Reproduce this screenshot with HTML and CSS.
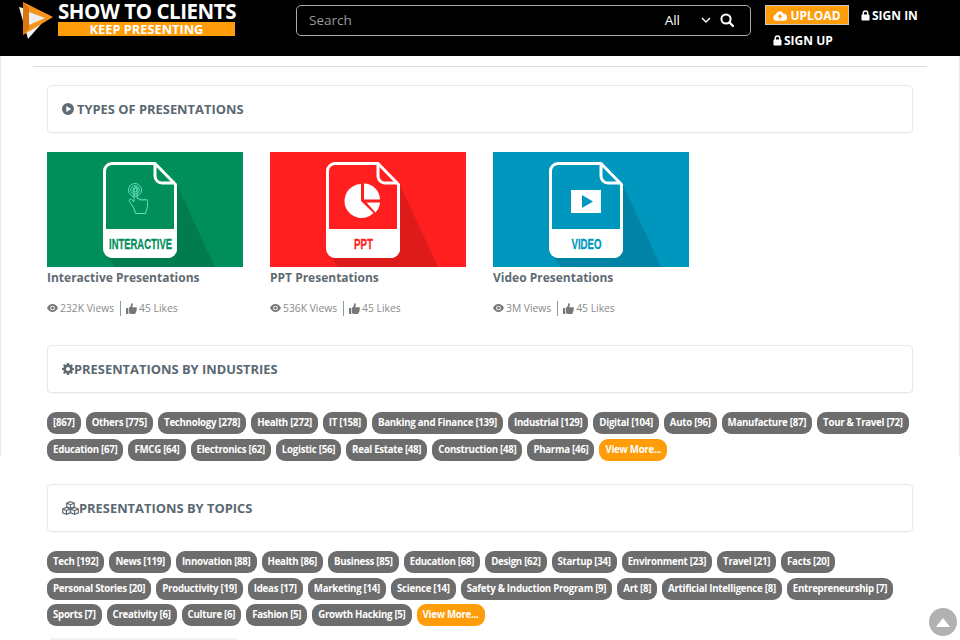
FILE: index.html
```html
<!DOCTYPE html>
<html lang="en">
<head>
<meta charset="utf-8">
<title>Show To Clients</title>
<link rel="stylesheet" href="styles.css">
</head>
<body>
<header class="topbar">
  <a class="logo">
    <svg class="logo-mark" viewBox="0 0 36 38" width="36" height="38">
      <polygon points="0,6 30,14 9,38" fill="#f2f2f2"/>
      <polygon points="4,1 34,16 4,34" fill="#f7941d"/>
      <polygon points="4,1 10,7 10,27 4,34" fill="#d9770f"/>
      <polygon points="10,11 26,17 10,24" fill="#eeeeee"/>
    </svg>
    <span class="logo-text">
      <span class="logo-name">SHOW TO CLIENTS</span>
      <span class="logo-tag">KEEP PRESENTING</span>
    </span>
  </a>
  <form class="search">
    <span class="search-hint">Search</span>
    <span class="search-scope">All</span>
    <svg class="search-chev" viewBox="0 0 10 6" width="10" height="6"><path d="M1 1l4 4 4-4" fill="none" stroke="#fff" stroke-width="1.4"/></svg>
    <svg class="search-glass" viewBox="0 0 14 14" width="14" height="14"><circle cx="6" cy="6" r="4.6" fill="none" stroke="#fff" stroke-width="2"/><path d="M9.4 9.4l3.6 3.6" stroke="#fff" stroke-width="2.2" stroke-linecap="round"/></svg>
  </form>
  <nav class="account">
    <div class="account-row">
      <a class="upload">
        <svg viewBox="0 0 16 12" width="14" height="11"><path d="M4 12a3.6 3.6 0 0 1-.9-7.1A4.6 4.6 0 0 1 11.8 4 4 4 0 0 1 12.500 12z" fill="#fff"/><path d="M8 10V6M6 7.600l2-2.200 2 2.200" fill="none" stroke="#ff9c0a" stroke-width="1.500"/></svg>
        UPLOAD
      </a>
      <a class="account-link">
        <svg viewBox="0 0 10 12" width="9" height="11"><path d="M2.500 5.500V3.500a2.500 2.500 0 0 1 5 0v2" fill="none" stroke="#fff" stroke-width="1.600"/><rect x="0.500" y="5" width="9" height="6.500" rx="1" fill="#fff"/></svg>
        SIGN IN
      </a>
    </div>
    <div class="account-row account-row-second">
      <a class="account-link">
        <svg viewBox="0 0 10 12" width="9" height="11"><path d="M2.500 5.500V3.500a2.500 2.500 0 0 1 5 0v2" fill="none" stroke="#fff" stroke-width="1.600"/><rect x="0.500" y="5" width="9" height="6.500" rx="1" fill="#fff"/></svg>
        SIGN UP
      </a>
    </div>
  </nav>
</header>

<main class="page">
  <hr class="rule">

  <section class="block">
    <h2 class="panel panel-first">
      <svg class="panel-icon" viewBox="0 0 12 12" width="12" height="12"><path fill-rule="evenodd" d="M6 0a6 6 0 1 1 0 12A6 6 0 0 1 6 0zM4.300 3v6L9.300 6z" fill="#5f6b73"/></svg>
      <span>TYPES OF PRESENTATIONS</span>
    </h2>
    <div class="cards">
      <article class="card">
        <svg class="thumb thumb-green" viewBox="0 0 196 115" width="196" height="115">
          <polygon class="doc-shadow" points="130,33 168,115 68,115 56,100"/>
          <path class="doc-body" d="M65 11.500h43l20.500 21V97a7.500 7.500 0 0 1-7.500 7.500H65a7.500 7.500 0 0 1-7.500-7.500V19a7.500 7.500 0 0 1 7.500-7.500z"/>
          <path class="doc-foot" d="M57 77h73v20a9 9 0 0 1-9 9H66a9 9 0 0 1-9-9z"/>
          <path class="doc-fold" d="M108 12v12a7 7 0 0 0 7 7h13"/>
          <text class="doc-label label-green" x="93.500" y="96.500" text-anchor="middle" textLength="63" lengthAdjust="spacingAndGlyphs">INTERACTIVE</text>
          <g class="hand">
            <circle cx="88" cy="38" r="2"/><circle cx="88" cy="38" r="4.200"/><circle cx="88" cy="38" r="6.500"/>
            <path d="M87 36v14l-2.500-2.500c-1.500-1-3 .5-2 2l4.500 7 1.500 5h10l2-7v-6c0-1.500-2-1.500-2.200 0 0-1.500-2.300-1.500-2.500 0 0-1.500-2.300-1.500-2.500 0l-.2-1.500-3-.5V36c0-1.500-2.600-1.500-2.600 0z"/>
          </g>
        </svg>
        <h3 class="card-title">Interactive Presentations</h3>
        <p class="stats">
          <svg viewBox="0 0 14 10" width="11" height="8"><path fill-rule="evenodd" d="M7 0c3 0 5.500 2 7 5-1.500 3-4 5-7 5S1.500 8 0 5c1.500-3 4-5 7-5zm0 2a3 3 0 1 0 0 6 3 3 0 0 0 0-6z" fill="#777"/><circle cx="7" cy="5" r="1.800" fill="#777"/></svg>
          <span>232K Views</span><span class="sep"></span>
          <svg viewBox="0 0 12 12" width="11" height="11"><path d="M0 5.500h2.500V12H0zM3.300 5.500 5.500 2.800V.8C5.500 0 7.300 0 7.500 1.500c.1 1-.4 2-.8 3h4c1.300 0 1.500 1.300.8 2 .6.700.4 1.600-.3 2 .3.800 0 1.500-.7 1.800.1 1-.5 1.700-1.500 1.700H6c-1 0-1.800-.6-2.700-.8z" fill="#777"/></svg>
          <span>45 Likes</span>
        </p>
      </article>
      <article class="card">
        <svg class="thumb thumb-red" viewBox="0 0 196 115" width="196" height="115">
          <polygon class="doc-shadow" points="130,33 168,115 68,115 56,100"/>
          <path class="doc-body" d="M65 11.500h43l20.500 21V97a7.500 7.500 0 0 1-7.500 7.500H65a7.500 7.500 0 0 1-7.500-7.500V19a7.500 7.500 0 0 1 7.500-7.500z"/>
          <path class="doc-foot" d="M57 77h73v20a9 9 0 0 1-9 9H66a9 9 0 0 1-9-9z"/>
          <path class="doc-fold" d="M108 12v12a7 7 0 0 0 7 7h13"/>
          <text class="doc-label label-red" x="93.500" y="96.500" text-anchor="middle" textLength="19" lengthAdjust="spacingAndGlyphs">PPT</text>
          <path class="pie" d="M91 32A17 17 0 1 0 103.500 61L91 49z"/>
          <path class="pie" d="M94 31.500A16.500 16.500 0 0 1 110 47.500H94z"/>
          <path class="pie" d="M96.500 50.500H110A17 17 0 0 1 105.500 60.500z"/>
        </svg>
        <h3 class="card-title">PPT Presentations</h3>
        <p class="stats">
          <svg viewBox="0 0 14 10" width="11" height="8"><path fill-rule="evenodd" d="M7 0c3 0 5.500 2 7 5-1.500 3-4 5-7 5S1.500 8 0 5c1.500-3 4-5 7-5zm0 2a3 3 0 1 0 0 6 3 3 0 0 0 0-6z" fill="#777"/><circle cx="7" cy="5" r="1.800" fill="#777"/></svg>
          <span>536K Views</span><span class="sep"></span>
          <svg viewBox="0 0 12 12" width="11" height="11"><path d="M0 5.500h2.500V12H0zM3.300 5.500 5.500 2.800V.8C5.500 0 7.300 0 7.500 1.500c.1 1-.4 2-.8 3h4c1.300 0 1.500 1.300.8 2 .6.700.4 1.600-.3 2 .3.800 0 1.500-.7 1.800.1 1-.5 1.700-1.500 1.700H6c-1 0-1.800-.6-2.700-.8z" fill="#777"/></svg>
          <span>45 Likes</span>
        </p>
      </article>
      <article class="card">
        <svg class="thumb thumb-blue" viewBox="0 0 196 115" width="196" height="115">
          <polygon class="doc-shadow" points="130,33 168,115 68,115 56,100"/>
          <path class="doc-body" d="M65 11.500h43l20.500 21V97a7.500 7.500 0 0 1-7.500 7.500H65a7.500 7.500 0 0 1-7.500-7.500V19a7.500 7.500 0 0 1 7.500-7.500z"/>
          <path class="doc-foot" d="M57 77h73v20a9 9 0 0 1-9 9H66a9 9 0 0 1-9-9z"/>
          <path class="doc-fold" d="M108 12v12a7 7 0 0 0 7 7h13"/>
          <text class="doc-label label-blue" x="93.500" y="96.500" text-anchor="middle" textLength="30" lengthAdjust="spacingAndGlyphs">VIDEO</text>
          <rect class="pie" x="78" y="38" width="30" height="23"/>
          <polygon class="play" points="89,43 100,49.500 89,56"/>
        </svg>
        <h3 class="card-title">Video Presentations</h3>
        <p class="stats">
          <svg viewBox="0 0 14 10" width="11" height="8"><path fill-rule="evenodd" d="M7 0c3 0 5.500 2 7 5-1.500 3-4 5-7 5S1.500 8 0 5c1.500-3 4-5 7-5zm0 2a3 3 0 1 0 0 6 3 3 0 0 0 0-6z" fill="#777"/><circle cx="7" cy="5" r="1.800" fill="#777"/></svg>
          <span>3M Views</span><span class="sep"></span>
          <svg viewBox="0 0 12 12" width="11" height="11"><path d="M0 5.500h2.500V12H0zM3.300 5.500 5.500 2.800V.8C5.500 0 7.300 0 7.500 1.500c.1 1-.4 2-.8 3h4c1.300 0 1.500 1.300.8 2 .6.700.4 1.600-.3 2 .3.800 0 1.500-.7 1.800.1 1-.5 1.700-1.500 1.700H6c-1 0-1.800-.6-2.700-.8z" fill="#777"/></svg>
          <span>45 Likes</span>
        </p>
      </article>
    </div>
  </section>

  <section class="block">
    <h2 class="panel">
      <svg class="panel-icon" viewBox="0 0 12 12" width="12" height="12"><path fill-rule="evenodd" d="M5 0h2l.3 1.600 1.100.5L9.800 1.200l1.100 1.100-.9 1.400.5 1.100L12 5v2l-1.500.3-.5 1.100.9 1.400-1.100 1.100-1.400-.9-1.100.5L7 12H5l-.3-1.500-1.100-.5-1.400.9-1.100-1.100.9-1.400-.5-1.100L0 7V5l1.500-.3.5-1.100-.9-1.400 1.100-1.100 1.400.9 1.100-.5zM6 4a2 2 0 1 0 0 4 2 2 0 0 0 0-4z" fill="#5f6b73"/></svg>
      <span>PRESENTATIONS BY INDUSTRIES</span>
    </h2>
    <div class="tags">
      <a class="tag">[867]</a>
      <a class="tag">Others [775]</a>
      <a class="tag">Technology [278]</a>
      <a class="tag">Health [272]</a>
      <a class="tag">IT [158]</a>
      <a class="tag">Banking and Finance [139]</a>
      <a class="tag">Industrial [129]</a>
      <a class="tag">Digital [104]</a>
      <a class="tag">Auto [96]</a>
      <a class="tag">Manufacture [87]</a>
      <a class="tag">Tour &amp; Travel [72]</a>
      <a class="tag">Education [67]</a>
      <a class="tag">FMCG [64]</a>
      <a class="tag">Electronics [62]</a>
      <a class="tag">Logistic [56]</a>
      <a class="tag">Real Estate [48]</a>
      <a class="tag">Construction [48]</a>
      <a class="tag">Pharma [46]</a>
      <a class="tag tag-more">View More...</a>
    </div>
  </section>

  <section class="block">
    <h2 class="panel">
      <svg class="panel-icon" viewBox="0 0 17 14" width="17" height="14"><g class="cubes"><path d="M8.500 .7l3.800 1.500v3.600L8.500 7.300 4.700 5.800V2.200zM4.700 2.200l3.800 1.500 3.800-1.500M8.500 3.700v3.600"/><path d="M4.500 6.500l3.800 1.500v3.800l-3.800 1.500-3.800-1.500V8zM.7 8l3.800 1.500L8.300 8M4.500 9.500v3.800"/><path d="M12.500 6.500l3.800 1.500v3.800l-3.800 1.500-3.800-1.500V8zM8.700 8l3.800 1.500L16.300 8M12.500 9.500v3.800"/></g></svg>
      <span>PRESENTATIONS BY TOPICS</span>
    </h2>
    <div class="tags tags-last">
      <a class="tag">Tech [192]</a>
      <a class="tag">News [119]</a>
      <a class="tag">Innovation [88]</a>
      <a class="tag">Health [86]</a>
      <a class="tag">Business [85]</a>
      <a class="tag">Education [68]</a>
      <a class="tag">Design [62]</a>
      <a class="tag">Startup [34]</a>
      <a class="tag">Environment [23]</a>
      <a class="tag">Travel [21]</a>
      <a class="tag">Facts [20]</a>
      <a class="tag">Personal Stories [20]</a>
      <a class="tag">Productivity [19]</a>
      <a class="tag">Ideas [17]</a>
      <a class="tag">Marketing [14]</a>
      <a class="tag">Science [14]</a>
      <a class="tag">Safety &amp; Induction Program [9]</a>
      <a class="tag">Art [8]</a>
      <a class="tag">Artificial Intelligence [8]</a>
      <a class="tag">Entrepreneurship [7]</a>
      <a class="tag">Sports [7]</a>
      <a class="tag">Creativity [6]</a>
      <a class="tag">Culture [6]</a>
      <a class="tag">Fashion [5]</a>
      <a class="tag">Growth Hacking [5]</a>
      <a class="tag tag-more">View More...</a>
    </div>
    <div class="peek"></div>
  </section>
</main>

<a class="to-top"><svg viewBox="0 0 14 9" width="14" height="9"><polygon points="7,0 14,9 0,9" fill="#fff"/></svg></a>
</body>
</html>
```
FILE: styles.css
```css
* { box-sizing: border-box; }
html, body { height: 640px; overflow: hidden; }
body { margin: 0; background: #fff; font-family: "Open Sans", "Liberation Sans", sans-serif; color: #5f6b73; }
body::before { content: ""; position: fixed; top: 56px; left: 0; right: 0; height: 400px; border-left: 1px solid #e8e8e8; border-right: 1px solid #e8e8e8; pointer-events: none; }
a { color: inherit; text-decoration: none; }

.topbar { height: 56px; background: #000; display: flex; align-items: flex-start; padding-left: 19px; }
.logo { width: 277px; display: flex; align-items: flex-start; height: 40px; }
.logo-mark { flex: none; margin-top: 1px; margin-right: 3px; }
.logo-text { width: 178px; display: flex; flex-direction: column; }
.logo-name { color: #fff; font-size: 20.5px; font-weight: 700; line-height: 22px; white-space: nowrap; letter-spacing: -.44px; }
.logo-tag { width: 177px; background: #ff9c0a; color: #fff; font-size: 12.8px; font-weight: 700; line-height: 14px; height: 14px; text-align: center; }

.search { width: 455px; height: 31px; margin-top: 5px; border: 1px solid #aaa; border-radius: 5px; display: flex; align-items: center; padding: 0 0 2px 12px; color: #fff; font-size: 13.5px; }
.search-hint { color: #9a9a9a; flex: 1; }
.search-scope { margin-right: 21px; font-size: 13.5px; }
.search-chev { margin-right: 9px; }
.search-glass { margin-right: 16px; }

.account { margin-left: 14px; color: #fff; font-size: 12px; font-weight: 700; }
.account-row { display: flex; align-items: center; margin-top: 5px; }
.account-row-second { margin-top: 7px; padding-left: 8px; }
.upload { width: 84px; height: 20px; background: #ff9c0a; border: 1px solid #c9c9c9; display: flex; align-items: center; justify-content: center; gap: 3px; margin-right: 12px; }
.account-link { display: flex; align-items: center; gap: 2px; }

.page { padding: 10px 33px 0; }
.rule { margin: 0 0 18px; border: 0; border-top: 1px solid #ddd; height: 1px; }
.block { padding: 0 14px; }
.panel { margin: 0; height: 48px; border: 1px solid #e8e8e8; border-radius: 4px; display: flex; align-items: center; padding-left: 14px; gap: 0; font-size: 12.9px; font-weight: 700; color: #5a6872; box-shadow: 0 1px 1px rgba(0,0,0,.03); }
.panel-first { gap: 3px; }
.panel-icon { flex: none; }
.cubes { fill: #fff; stroke: #5f6b73; stroke-width: 1.2; }

.cards { display: flex; gap: 27px; margin-top: 19px; margin-bottom: 29px; }
.card { width: 196px; }
.thumb { display: block; }
.thumb-green { background: #008f5a; }
.thumb-red { background: #ff1f1f; }
.thumb-blue { background: #0097be; }
.doc-shadow { fill: rgba(0,0,0,.13); }
.doc-body { stroke: #fff; stroke-width: 3; }
.thumb-green .doc-body { fill: #008f5a; }
.thumb-red .doc-body { fill: #ff1f1f; }
.thumb-blue .doc-body { fill: #0097be; }
.doc-foot { fill: #fff; }
.doc-fold { fill: none; stroke: #fff; stroke-width: 3; }
.doc-label { font-family: "Liberation Sans", sans-serif; font-size: 15px; font-weight: 700; stroke-width: .3; }
.label-green { fill: #008f5a; stroke: #008f5a; }
.label-red { fill: #ff1f1f; stroke: #ff1f1f; }
.label-blue { fill: #0097be; stroke: #0097be; }
.hand { fill: none; stroke: #6fe8c4; stroke-width: .9; }
.pie { fill: #fff; }
.play { fill: #0097be; }

.card-title { margin: 2px 0 0; font-size: 12px; font-weight: 700; line-height: 17px; color: #5f6b73; }
.stats { margin: 14px 0 0; display: flex; align-items: center; font-size: 10.3px; line-height: 16px; color: #8a8a8a; gap: 2px; }
.sep { width: 1px; height: 15px; background: #8a9aa0; margin: 0 3px 0 4px; }

.tags { display: flex; flex-wrap: wrap; gap: 4.6px 5px; margin-top: 19px; margin-bottom: 23.4px; }
.tags-last { margin-bottom: 12px; }
.tag { height: 22px; padding: 0 6px; border-radius: 9px; background: #6d6d6d; color: #fff; font-size: 9.7px; font-weight: 700; letter-spacing: -.28px; line-height: 21px; white-space: nowrap; }
.tag-more { background: #ff9c0a; }
.peek { width: 187px; height: 20px; margin-left: 3px; background: #f1f1f1; }

.to-top { position: fixed; right: 3px; bottom: 4px; width: 28px; height: 28px; border-radius: 50%; background: #b2b2b2; display: flex; align-items: center; justify-content: center; }
```
